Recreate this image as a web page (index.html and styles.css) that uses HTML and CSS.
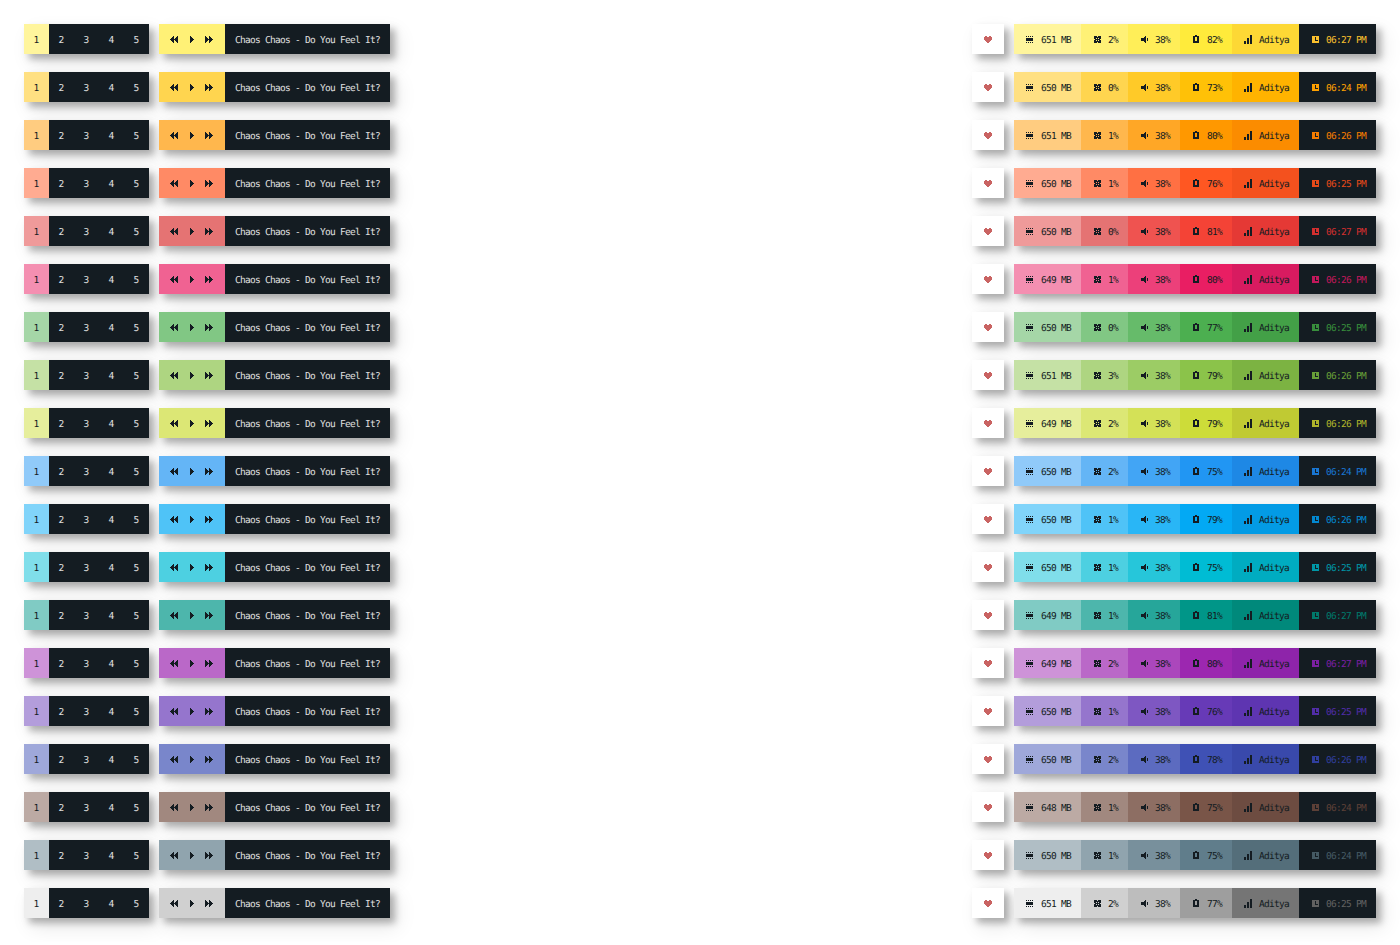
FILE: index.html
```html
<!DOCTYPE html>
<html lang="en">
<head>
  <meta charset="UTF-8">
  <meta name="viewport" content="width=device-width,initial-scale=1.0">
  <title>Status bar colour themes</title>
  <link rel="stylesheet" href="styles.css">
</head>
<body>
  <main class="bars" id="bars"></main>
  <script src="script.js"></script>
</body>
</html>
```

FILE: styles.css
```css
body {
  margin: 0;
  padding: 24px;
  background-color: #ffffff;
  color: #141c22;
  font-family: "DejaVu Sans Mono", "Liberation Mono", monospace;
  font-size: 9.5px;
  letter-spacing: -0.72px;
  text-rendering: geometricPrecision;
}

.bars {
  display: flex;
  flex-direction: column;
  gap: 18px;
}

.row {
  display: flex;
  justify-content: space-between;
  height: 30px;
}

.group {
  display: flex;
  gap: 10px;
}

.block {
  display: flex;
  box-shadow: 5px 5px 7px rgba(0, 0, 0, 0.28), 7px 9px 20px rgba(0, 0, 0, 0.1);
}

.ws {
  display: flex;
  align-items: center;
  justify-content: center;
  width: 25px;
  padding: 3px 1px 0 0;
  box-sizing: border-box;
  background-color: #141c22;
  color: #e0e0e0;
}
.ws.active {
  background-color: var(--c1);
  color: #141c22;
}

.media {
  display: flex;
  align-items: center;
  gap: 8px;
  padding: 0 10px;
  background-color: var(--c2);
}

.title {
  display: flex;
  align-items: center;
  padding: 3px 10px 0;
  background-color: #141c22;
  color: #e0e0e0;
}

.heart {
  display: flex;
  align-items: center;
  justify-content: center;
  width: 32px;
  background-color: #ffffff;
  color: #c96362;
}

.item {
  display: flex;
  align-items: center;
  gap: 5px;
  padding: 0 10px;
}
.item span {
  padding-top: 3px;
}
.item:nth-child(1) { background-color: var(--c1); }
.item:nth-child(2) { background-color: var(--c2); }
.item:nth-child(3) { background-color: var(--c3); }
.item:nth-child(4) { background-color: var(--c4); }
.item:nth-child(5) { background-color: var(--c5); }
.item:nth-child(6) { background-color: #141c22; color: var(--c6); }

.icon {
  display: block;
  flex: none;
  fill: currentColor;
  shape-rendering: crispEdges;
}

/* material shades 200 - 700 */
.yellow { --c1: #fff59d; --c2: #fff176; --c3: #ffee58; --c4: #ffeb3b; --c5: #fdd835; --c6: #fbc02d; }
.amber { --c1: #ffe082; --c2: #ffd54f; --c3: #ffca28; --c4: #ffc107; --c5: #ffb300; --c6: #ffa000; }
.orange { --c1: #ffcc80; --c2: #ffb74d; --c3: #ffa726; --c4: #ff9800; --c5: #fb8c00; --c6: #f57c00; }
.deep-orange { --c1: #ffab91; --c2: #ff8a65; --c3: #ff7043; --c4: #ff5722; --c5: #f4511e; --c6: #e64a19; }
.red { --c1: #ef9a9a; --c2: #e57373; --c3: #ef5350; --c4: #f44336; --c5: #e53935; --c6: #d32f2f; }
.pink { --c1: #f48fb1; --c2: #f06292; --c3: #ec407a; --c4: #e91e63; --c5: #d81b60; --c6: #c2185b; }
.green { --c1: #a5d6a7; --c2: #81c784; --c3: #66bb6a; --c4: #4caf50; --c5: #43a047; --c6: #388e3c; }
.light-green { --c1: #c5e1a5; --c2: #aed581; --c3: #9ccc65; --c4: #8bc34a; --c5: #7cb342; --c6: #689f38; }
.lime { --c1: #e6ee9c; --c2: #dce775; --c3: #d4e157; --c4: #cddc39; --c5: #c0ca33; --c6: #afb42b; }
.blue { --c1: #90caf9; --c2: #64b5f6; --c3: #42a5f5; --c4: #2196f3; --c5: #1e88e5; --c6: #1976d2; }
.light-blue { --c1: #81d4fa; --c2: #4fc3f7; --c3: #29b6f6; --c4: #03a9f4; --c5: #039be5; --c6: #0288d1; }
.cyan { --c1: #80deea; --c2: #4dd0e1; --c3: #26c6da; --c4: #00bcd4; --c5: #00acc1; --c6: #0097a7; }
.teal { --c1: #80cbc4; --c2: #4db6ac; --c3: #26a69a; --c4: #009688; --c5: #00897b; --c6: #00796b; }
.purple { --c1: #ce93d8; --c2: #ba68c8; --c3: #ab47bc; --c4: #9c27b0; --c5: #8e24aa; --c6: #7b1fa2; }
.deep-purple { --c1: #b39ddb; --c2: #9575cd; --c3: #7e57c2; --c4: #673ab7; --c5: #5e35b1; --c6: #512da8; }
.indigo { --c1: #9fa8da; --c2: #7986cb; --c3: #5c6bc0; --c4: #3f51b5; --c5: #3949ab; --c6: #303f9f; }
.brown { --c1: #bcaaa4; --c2: #a1887f; --c3: #8d6e63; --c4: #795548; --c5: #6d4c41; --c6: #5d4037; }
.blue-grey { --c1: #b0bec5; --c2: #90a4ae; --c3: #78909c; --c4: #607d8b; --c5: #546e7a; --c6: #455a64; }
.grey { --c1: #eeeeee; --c2: #d0d0d0; --c3: #bdbdbd; --c4: #9e9e9e; --c5: #757575; --c6: #616161; }
```

FILE: script.js
```js
// theme, memory, cpu, battery, time
const rows = [
  ["yellow", 651, 2, 82, "06:27"],
  ["amber", 650, 0, 73, "06:24"],
  ["orange", 651, 1, 80, "06:26"],
  ["deep-orange", 650, 1, 76, "06:25"],
  ["red", 650, 0, 81, "06:27"],
  ["pink", 649, 1, 80, "06:26"],
  ["green", 650, 0, 77, "06:25"],
  ["light-green", 651, 3, 79, "06:26"],
  ["lime", 649, 2, 79, "06:26"],
  ["blue", 650, 2, 75, "06:24"],
  ["light-blue", 650, 1, 79, "06:26"],
  ["cyan", 650, 1, 75, "06:25"],
  ["teal", 649, 1, 81, "06:27"],
  ["purple", 649, 2, 80, "06:27"],
  ["deep-purple", 650, 1, 76, "06:25"],
  ["indigo", 650, 2, 78, "06:26"],
  ["brown", 648, 1, 75, "06:24"],
  ["blue-grey", 650, 1, 75, "06:24"],
  ["grey", 651, 2, 77, "06:25"]
];

// pixel icons, "#" is a filled pixel
const icons = {
  prev: ["...#...#", "..##..##", ".###.###", "########", ".###.###", "..##..##", "...#...#"],
  play: ["#....", "##...", "###..", "####.", "###..", "##...", "#...."],
  next: ["#...#...", "##..##..", "###.###.", "########", "###.###.", "##..##..", "#...#..."],
  heart: [".##..##.", "########", "########", "########", ".######.", "..####..", "...##..."],
  mem: ["#.#.#.#", ".......", "#######", "#######", "#######", ".......", "#.#.#.#"],
  cpu: ["###.###", "#######", "##.#.##", ".#####.", "##.#.##", "#######", "###.###"],
  vol: ["....#...", "...##...", "#####.#.", "#####.#.", "#####.#.", "...##...", "....#..."],
  bat: ["..##..", "######", "##..##", "##..##", "##..##", "##..##", "######", "######"],
  net: [".......##", ".......##", ".......##", "....##.##", "....##.##", "....##.##", ".##.##.##", ".##.##.##", ".##.##.##"],
  clock: ["#######", "###.###", "###.###", "###.###", "###...#", "#######", "#######"]
};

// w, h = svg box, x, y = where the pixels start in it
function icon(name, w, h, x, y) {
  let d = "";
  icons[name].forEach((line, r) => {
    [...line].forEach((c, i) => {
      if (c === "#") d += `M${x + i} ${y + r}h1v1h-1z`;
    });
  });
  return `<svg class="icon" width="${w}" height="${h}" viewBox="0 0 ${w} ${h}"><path d="${d}"/></svg>`;
}

function item(name, x, y, text) {
  return `<div class="item">${icon(name, 12, 12, x, y)}<span>${text}</span></div>`;
}

function row([theme, mem, cpu, bat, time]) {
  return `
    <section class="row ${theme}">
      <div class="group">
        <div class="block">
          <div class="ws active">1</div>
          <div class="ws">2</div>
          <div class="ws">3</div>
          <div class="ws">4</div>
          <div class="ws">5</div>
        </div>
        <div class="block">
          <div class="media">${icon("prev", 10, 12, 1, 3)}${icon("play", 10, 12, 3, 3)}${icon("next", 10, 12, 0, 3)}</div>
          <div class="title">Chaos Chaos - Do You Feel It?</div>
        </div>
      </div>
      <div class="group">
        <div class="block heart">${icon("heart", 8, 12, 0, 3)}</div>
        <div class="block">
          ${item("mem", 2, 3, mem + " MB")}
          ${item("cpu", 3, 3, cpu + "%")}
          ${item("vol", 3, 3, "38%")}
          ${item("bat", 3, 2, bat + "%")}
          ${item("net", 1, 2, "Aditya")}
          ${item("clock", 3, 3, time + " PM")}
        </div>
      </div>
    </section>`;
}

document.getElementById("bars").innerHTML = rows.map(row).join("");
```
